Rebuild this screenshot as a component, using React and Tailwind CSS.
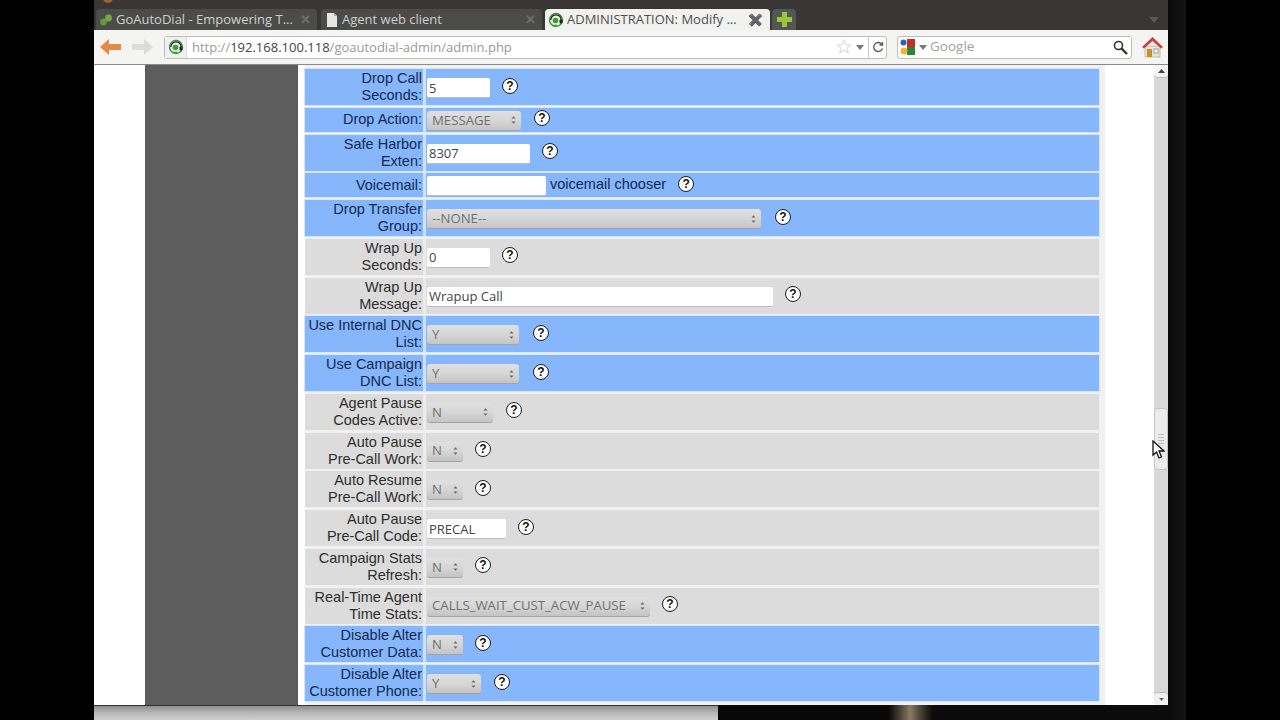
const rows = [
  { color: "blue", label: ["Drop Call", "Seconds:"], type: "input", value: "5", w: "w-[63px]", gap: "gap-[12px]" },
  { color: "blue", single: true, label: ["Drop Action:"], type: "select", value: "MESSAGE", w: "w-[94px]", gap: "gap-[13px]" },
  { color: "blue", label: ["Safe Harbor", "Exten:"], type: "input", value: "8307", w: "w-[103px]", gap: "gap-[12px]" },
  { color: "blue", single: true, label: ["Voicemail:"], type: "input", value: "", w: "w-[119px]", gap: "gap-[12px]", extra: "voicemail chooser" },
  { color: "blue", label: ["Drop Transfer", "Group:"], type: "select", value: "--NONE--", w: "w-[334px]", gap: "gap-[14px]" },
  { color: "gray", label: ["Wrap Up", "Seconds:"], type: "input", value: "0", w: "w-[63px]", gap: "gap-[12px]" },
  { color: "gray", label: ["Wrap Up", "Message:"], type: "input", value: "Wrapup Call", w: "w-[346px]", gap: "gap-[12px]" },
  { color: "blue", label: ["Use Internal DNC", "List:"], type: "select", value: "Y", w: "w-[92px]", gap: "gap-[14px]" },
  { color: "blue", label: ["Use Campaign", "DNC List:"], type: "select", value: "Y", w: "w-[92px]", gap: "gap-[14px]" },
  { color: "gray", label: ["Agent Pause", "Codes Active:"], type: "select", value: "N", w: "w-[66px]", gap: "gap-[13px]" },
  { color: "gray", label: ["Auto Pause", "Pre-Call Work:"], type: "select", value: "N", w: "w-[36px]", gap: "gap-[12px]" },
  { color: "gray", label: ["Auto Resume", "Pre-Call Work:"], type: "select", value: "N", w: "w-[36px]", gap: "gap-[12px]" },
  { color: "gray", label: ["Auto Pause", "Pre-Call Code:"], type: "input", value: "PRECAL", w: "w-[79px]", gap: "gap-[12px]" },
  { color: "gray", label: ["Campaign Stats", "Refresh:"], type: "select", value: "N", w: "w-[36px]", gap: "gap-[12px]" },
  { color: "gray", label: ["Real-Time Agent", "Time Stats:"], type: "select", value: "CALLS_WAIT_CUST_ACW_PAUSE", w: "w-[223px]", gap: "gap-[12px]" },
  { color: "blue", label: ["Disable Alter", "Customer Data:"], type: "select", value: "N", w: "w-[36px]", gap: "gap-[12px]" },
  { color: "blue", label: ["Disable Alter", "Customer Phone:"], type: "select", value: "Y", w: "w-[54px]", gap: "gap-[13px]" },
];

function Favicon() {
  return (
    <svg width="16" height="16" viewBox="0 0 16 16" className="shrink-0">
      <circle cx="8" cy="8" r="6.500" fill="#e6f2e0" stroke="#4c8f46" strokeWidth="1.400" />
      <circle cx="7.500" cy="8.500" r="2.800" fill="#3c9c3c" />
      <path d="M2.800 8a5.200 5.200 0 0 1 10.400 0" fill="none" stroke="#222" strokeWidth="1.300" />
      <rect x="11.500" y="7.500" width="3" height="4" rx="1" fill="#222" />
      <path d="M4 13.500h5" stroke="#3c9c3c" strokeWidth="1.500" />
    </svg>
  );
}

function Help() {
  return (
    <span className="mb-[3px] flex h-[16px] w-[16px] shrink-0 items-center justify-center rounded-full border-[1.5px] border-[#1b1b1b] bg-white font-['Liberation_Sans',sans-serif] text-[12px] font-bold leading-none text-[#111]">
      ?
    </span>
  );
}

function Select({ value, w }) {
  return (
    <div className={`${w} mt-[2px] flex h-[20px] shrink-0 items-center justify-between rounded-[3px] border-b border-[#a4a4a4] bg-gradient-to-b from-[#e0e0e0] via-[#d6d6d6] to-[#c4c4c4] pl-[5px] pr-[5px] font-['Open_Sans',sans-serif] text-[13.2px] leading-none text-[#707070]`}>
      <span className="whitespace-nowrap">{value}</span>
      <svg width="5" height="10" viewBox="0 0 5 10" className="shrink-0">
        <path d="M0.500 3.500 2.500 1.200 4.500 3.500zM0.500 6.500 2.500 8.800 4.500 6.500z" fill="#666" />
      </svg>
    </div>
  );
}

function Row({ row }) {
  const blue = row.color === "blue";
  return (
    <div className={`flex ${row.single ? "h-[24px]" : "h-[36px]"} w-[794px] shrink-0 ${blue ? "bg-[#cfe3fd] shadow-[0_0_0_1px_#d6e6fc]" : "bg-[#ececec]"}`}>
      <div className={`flex w-[118px] shrink-0 flex-col items-end justify-center whitespace-nowrap pr-[1px] font-['Liberation_Sans',sans-serif] text-[14.5px] leading-[17px] ${blue ? "bg-[#86b6fb] text-[#13294f]" : "bg-[#dcdcdc] text-[#2e2e2e]"}`}>
        {row.label.map((line) => (
          <span key={line}>{line}</span>
        ))}
      </div>
      <div className={`ml-[3px] flex flex-1 items-center pl-[1px] ${row.gap} ${blue ? "bg-[#86b6fb]" : "bg-[#dcdcdc]"}`}>
        {row.type === "input" ? (
          <input
            readOnly
            value={row.value}
            className={`${row.w} mt-[2px] h-[20px] shrink-0 rounded-[2px] border-b border-[#bdbdbd] bg-white pl-[2px] font-['Open_Sans',sans-serif] text-[13px] text-[#444] outline-none`}
          />
        ) : (
          <Select value={row.value} w={row.w} />
        )}
        {row.extra && (
          <span className="-ml-[8px] whitespace-nowrap font-['Liberation_Sans',sans-serif] text-[14.5px] text-[#13294f]">
            {row.extra}
          </span>
        )}
        <Help />
      </div>
    </div>
  );
}

function TabStrip() {
  return (
    <div className="flex h-[22px] items-end bg-[#383735] pl-[2px] pr-[8px]">
      <div className="mr-[4px] flex h-[21px] w-[221px] items-center gap-[3px] rounded-t-[4px] bg-[#4b4b49] pl-[3px] pr-[6px]">
        <svg width="14" height="14" viewBox="0 0 14 14" className="shrink-0">
          <circle cx="4.500" cy="9" r="3.400" fill="#5f9a35" />
          <circle cx="9.500" cy="5" r="3.400" fill="#76a83f" />
        </svg>
        <span className="flex-1 whitespace-nowrap font-['Open_Sans',sans-serif] text-[13px] leading-none text-[#cfcfcf]">GoAutoDial - Empowering T...</span>
        <span className="text-[13px] font-bold leading-none text-[#6f6f6f]">✕</span>
      </div>
      <div className="mr-[3px] flex h-[21px] w-[221px] items-center gap-[4px] rounded-t-[4px] bg-[#4b4b49] pl-[5px] pr-[6px]">
        <svg width="12" height="14" viewBox="0 0 12 14" className="shrink-0">
          <path d="M1 0h7l3 3v11H1z" fill="#e6e6e6" />
          <path d="M8 0v3h3z" fill="#aaa" />
        </svg>
        <span className="flex-1 whitespace-nowrap font-['Open_Sans',sans-serif] text-[13px] leading-none text-[#cfcfcf]">Agent web client</span>
        <span className="text-[13px] font-bold leading-none text-[#6f6f6f]">✕</span>
      </div>
      <div className="flex h-[21px] w-[225px] items-center gap-[3px] rounded-t-[4px] bg-[#f1f1f0] pl-[3px] pr-[7px]">
        <Favicon />
        <span className="flex-1 whitespace-nowrap font-['Open_Sans',sans-serif] text-[13px] leading-none text-[#4f4f4f]">ADMINISTRATION: Modify ...</span>
        <span className="text-[12px] font-bold leading-none text-[#3c3c3c]">✖</span>
      </div>
      <div className="ml-[2px] flex h-[21px] w-[24px] items-center justify-center rounded-t-[4px] bg-[#555553]">
        <svg width="15" height="15" viewBox="0 0 15 15">
          <path d="M5 0h5v5h5v5h-5v5H5v-5H0V5h5z" fill="#9cc43c" />
        </svg>
      </div>
      <div className="flex-1" />
      <svg width="10" height="6" viewBox="0 0 10 6" className="mb-[7px] mr-[1px]">
        <path d="M0 0h10L5 6z" fill="#5a5a5a" />
      </svg>
    </div>
  );
}

function Toolbar() {
  return (
    <div className="flex h-[35px] items-center border-b border-[#8a8a8a] bg-[#f4f4f3] pl-[6px]">
      <svg width="22" height="16" viewBox="0 0 22 16" className="shrink-0">
        <path d="M9 0 0 8l9 8v-5h12V5H9z" fill="#e58a45" />
      </svg>
      <svg width="22" height="16" viewBox="0 0 22 16" className="ml-[9px] shrink-0">
        <path d="M13 0l9 8-9 8v-5H1V5h12z" fill="#dcdcdc" />
      </svg>
      <div className="ml-[11px] flex h-[23px] w-[723px] shrink-0 items-center rounded-[3px] border border-[#bdbdbd] bg-white">
        <div className="flex h-full w-[22px] items-center justify-center border-r border-[#ddd] bg-[#f0f0f0]">
          <Favicon />
        </div>
        <span className="ml-[5px] flex-1 whitespace-nowrap font-['Open_Sans',sans-serif] text-[13px] leading-none text-[#9a9a9a]">
          http://<span className="text-[#444]">192.168.100.118</span>/goautodial-admin/admin.php
        </span>
        <svg width="16" height="16" viewBox="0 0 24 24" fill="none" stroke="#dcdcdc" strokeWidth="1.600">
          <path d="M12 2l3 7h7l-5.500 4.600L18.500 21 12 16.800 5.500 21l2-7.400L2 9h7z" />
        </svg>
        <svg width="8" height="5" viewBox="0 0 8 5" className="ml-[4px]">
          <path d="M0 0h8L4 5z" fill="#777" />
        </svg>
        <div className="ml-[4px] flex h-full w-[18px] items-center justify-center border-l border-[#ccc]">
          <svg width="12" height="12" viewBox="0 0 24 24" fill="none" stroke="#555" strokeWidth="2.600">
            <path d="M20 7a9 9 0 1 0 1 8" />
            <path d="M21 2v6h-6" />
          </svg>
        </div>
      </div>
      <div className="ml-[10px] flex h-[23px] w-[235px] shrink-0 items-center rounded-[3px] border border-[#bdbdbd] bg-white pl-[2px] pr-[3px]">
        <svg width="15" height="16" viewBox="0 0 15 16" className="shrink-0">
          <rect x="7" y="0" width="8" height="8" fill="#c92a22" />
          <rect x="7" y="8" width="8" height="8" fill="#1f8a3b" />
          <circle cx="3.500" cy="3.500" r="3" fill="#2c62b5" />
          <circle cx="4" cy="12" r="3.500" fill="#efb82e" />
        </svg>
        <svg width="8" height="5" viewBox="0 0 8 5" className="ml-[4px] shrink-0">
          <path d="M0 0h8L4 5z" fill="#777" />
        </svg>
        <span className="ml-[3px] flex-1 font-['Open_Sans',sans-serif] text-[13.5px] leading-none text-[#a0a0a0]">Google</span>
        <svg width="15" height="15" viewBox="0 0 15 15" fill="none" stroke="#333" className="shrink-0">
          <circle cx="5.500" cy="5.500" r="4" strokeWidth="1.600" />
          <path d="M8.500 8.500 14 14" strokeWidth="2.400" />
        </svg>
      </div>
      <svg width="21" height="22" viewBox="0 0 21 22" className="ml-[10px] shrink-0">
        <path d="M3 10h15v11H3z" fill="#e9e4d6" stroke="#a89f8a" strokeWidth="0.600" />
        <path d="M0 11 10.500 1 21 11l-2 1.500L10.500 5 2 12.500z" fill="#c8433f" />
        <rect x="5" y="13" width="5" height="8" fill="#c98f2e" />
        <rect x="12" y="13" width="4" height="4" fill="#fff" stroke="#7e8b8b" strokeWidth="0.800" />
      </svg>
    </div>
  );
}

function Scrollbar() {
  return (
    <div className="flex w-[14px] shrink-0 flex-col bg-[#d8d8d8]">
      <div className="flex h-[13px] shrink-0 items-center justify-center rounded-b-[4px] border-b border-[#bbb] bg-[#f4f4f4]">
        <svg width="7" height="4" viewBox="0 0 7 4"><path d="M0 4l3.500-4L7 4z" fill="#444" /></svg>
      </div>
      <div className="h-[330px] shrink-0" />
      <div className="flex h-[62px] shrink-0 flex-col items-center justify-center gap-[2px] rounded-[4px] border border-[#c4c4c4] bg-[#ececec]">
        <span className="h-px w-[6px] bg-[#bbb]" />
        <span className="h-px w-[6px] bg-[#bbb]" />
        <span className="h-px w-[6px] bg-[#bbb]" />
        <span className="h-px w-[6px] bg-[#bbb]" />
      </div>
      <div className="flex-1" />
      <div className="flex h-[13px] shrink-0 items-center justify-center rounded-t-[4px] border-t border-[#bbb] bg-[#f0f0f0]">
        <svg width="5" height="3" viewBox="0 0 5 3"><path d="M0 0h5L2.500 3z" fill="#666" /></svg>
      </div>
    </div>
  );
}

export default function App() {
  return (
    <div className="relative flex h-[720px] w-[1280px] overflow-hidden bg-black">
      <div className="w-[94px] shrink-0" />

      <div className="flex w-[1074px] shrink-0 flex-col">
        {/* barra de titulo, casi cortada */}
        <div className="flex h-[8px] items-start bg-[#383735] pl-[9px]">
          <span className="-mt-[7px] h-[10px] w-[10px] rounded-full bg-[#a85e38]" />
        </div>
        <TabStrip />
        <Toolbar />

        <div className="flex h-[640px] bg-white">
          <div className="w-[51px] shrink-0 bg-white" />
          <div className="w-[153px] shrink-0 bg-[#5d5d5d]" />
          <div className="flex flex-1 overflow-hidden pl-[7px]">
            <div className="flex w-[800px] flex-col gap-[2.750px] bg-[#f1f1f1] pt-[4px]">
              {rows.map((row) => (
                <Row key={row.label.join(" ")} row={row} />
              ))}
            </div>
          </div>
          <Scrollbar />
        </div>

        <div className="flex h-[15px] shrink-0">
          <div className="w-[624px] shrink-0 border-t border-[#333] bg-gradient-to-b from-[#8e8e8e] via-[#b8b8b8] to-[#cfcfcf]" />
          <div className="w-[170px] shrink-0 bg-[#080808]" />
          <div className="w-[44px] shrink-0 bg-gradient-to-r from-[#080808] via-[#8a7a66] to-[#0f0d0a]" />
          <div className="flex-1 bg-[#0b0b0b]" />
        </div>
      </div>

      <div className="w-[18px] shrink-0 bg-gradient-to-r from-[#0a0a0a] to-[#151515]" />

      {/* puntero del raton */}
      <svg width="13" height="19" viewBox="0 0 13 19" className="absolute left-[1152px] top-[440px]">
        <path d="M1 1v14l3.500-3 2.500 6 2.500-1-2.500-6H12z" fill="#fff" stroke="#111" strokeWidth="1.300" />
      </svg>
    </div>
  );
}
